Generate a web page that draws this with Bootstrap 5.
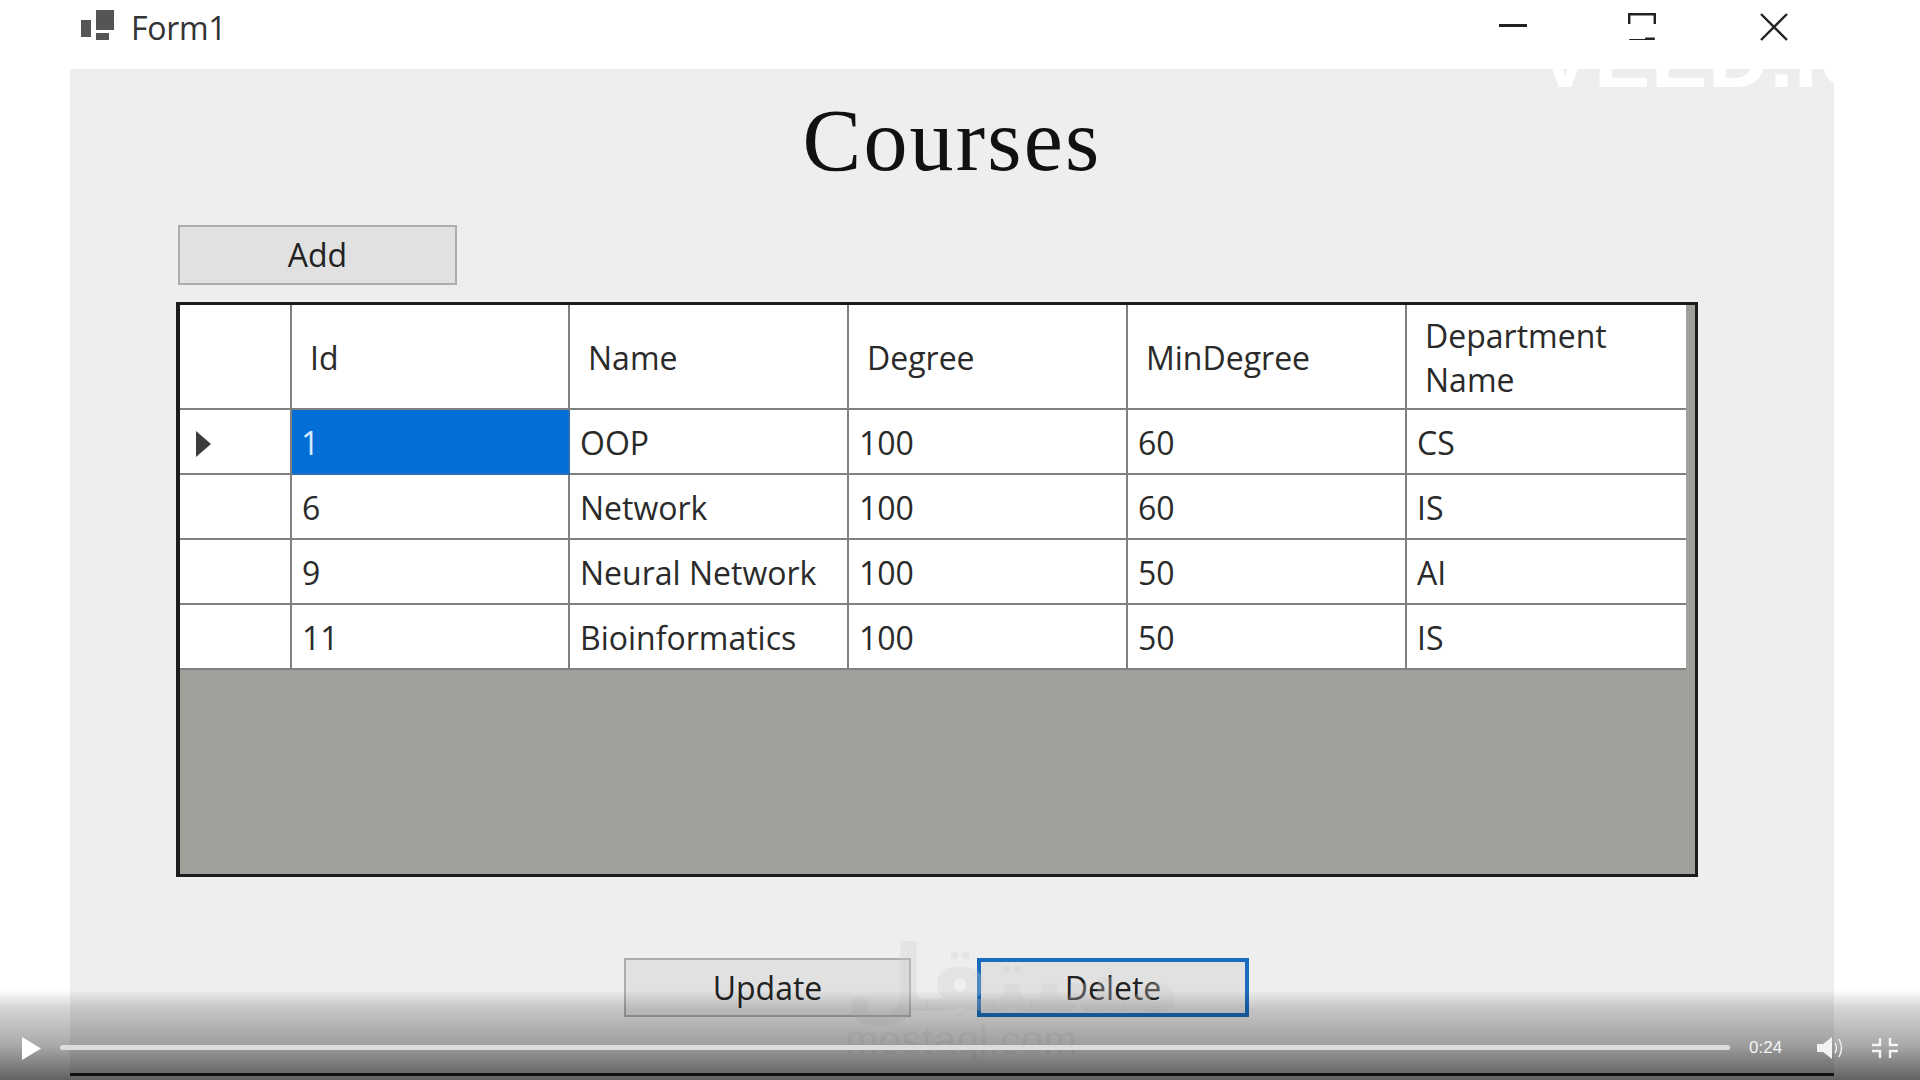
<!DOCTYPE html>
<html lang="en">
<head>
    <meta charset="UTF-8">
    <meta name="viewport" content="width=device-width, initial-scale=1.0">
    <title>Form1</title>
    <link href="https://cdn.jsdelivr.net/npm/bootstrap@5.3.0/dist/css/bootstrap.min.css" rel="stylesheet">
    <style>
        html, body { height: 1080px; overflow: hidden; background: #fff; }
        body { font-family: "Open Sans", "Noto Sans", sans-serif; color: #222; }

        .win-frame { margin-left: 70px; width: 1764px; height: 1076px; border-bottom: 3px solid #222; }
        .win-title { height: 69px; flex-shrink: 0; padding-left: 11px; background: #fff; }
        .win-icon { margin-top: 10px; }
        .win-title-text { font-size: 32px; line-height: 40px; margin-left: 16px; margin-top: 8px; color: #333; letter-spacing: -.3px; }
        .win-btn-min { margin-left: auto; margin-top: 24px; margin-right: 101px; }
        .win-btn-max { margin-top: 13px; margin-right: 104px; }
        .win-btn-close { margin-top: 13px; margin-right: 46px; }

        .form-area { background: #eee; padding-left: 108px; }
        .form-heading { font-family: "Liberation Serif", serif; font-size: 88px; line-height: 96px; margin: 24px 0 0; padding-right: 108px; text-align: center; font-weight: 400; color: #111; letter-spacing: 2.2px; height: 132px; }

        .form-btn { background: #e1e1e1; border: 2px solid #adadad; border-radius: 0; font-size: 32px; line-height: 1; color: #222; padding: 0; display: block; }
        .form-btn-add { width: 279px; height: 60px; }
        .form-btn-update { width: 287px; height: 59px; }
        .form-btn-delete { width: 272px; height: 59px; border: 4px solid #1a6cbc; margin-left: 66px; }

        .grid-box { width: 1522px; height: 575px; margin-top: 17px; margin-left: -2px; background: #a0a09b; border: 3px solid #1c1c1c; border-left-width: 4px; }
        .grid-table { width: 1506px; table-layout: fixed; margin: 0; background: #fff; border-collapse: collapse; font-size: 32px; }
        .grid-table th, .grid-table td { border: 2px solid #808080; padding: 2px 0 0 10px; vertical-align: middle; font-weight: 400; color: #2a2a2a; background: #fff; box-shadow: none; }
        .grid-table th { padding-left: 18px; height: 104px; line-height: 44px; }
        .grid-table td { height: 65px; }
        .grid-table tr > :first-child { border-left: 0; padding-left: 15px; }
        .grid-table tr > :last-child { border-right: 0; }
        .grid-table thead th { border-top: 0; }
        .grid-table td.cell-picked { background: #036fd6; color: #d8ecff; padding-left: 9px; border-color: #2a6fb5; }
        .row-arrow { display: block; margin-top: 2px; }

        .form-footer { height: 196px; padding-left: 446px; padding-top: 81px; }

        .player-bar { position: absolute; left: 0; right: 0; top: 990px; height: 90px; background: linear-gradient(to bottom, rgba(0,0,0,0), rgba(0,0,0,.17) 20%, rgba(0,0,0,.33) 60%, rgba(0,0,0,.62) 100%); }
        .player-row { height: 64px; padding-left: 22px; }
        .player-track { width: 1670px; height: 5px; border-radius: 3px; background: #dcdcdc; margin-left: 19px; margin-top: -2px; }
        .player-time { font-size: 17px; color: #f4f4f4; margin-left: 19px; font-family: "Liberation Sans", sans-serif; width: 36px; }
        .player-vol { margin-left: auto; margin-right: -1px; }
        .player-exit { margin-left: 29px; margin-right: 22px; }

        .mark-ar, .mark-en { position: absolute; color: rgba(205,205,205,.3); font-weight: 700; white-space: nowrap; }
        .mark-ar { left: 845px; top: 925px; font-size: 92px; line-height: 110px; font-family: "DejaVu Sans", sans-serif; }
        .mark-en { left: 845px; top: 1015px; font-size: 40px; line-height: 50px; font-family: "Liberation Sans", sans-serif; font-weight: 400; letter-spacing: .5px; }
        .mark-veed { position: absolute; left: 1537px; top: 22px; font-family: "Liberation Sans", sans-serif; font-weight: 700; font-size: 84px; line-height: 72px; letter-spacing: 1px; color: #fff; }
    </style>
</head>
<body>

<div class="win-frame d-flex flex-column">
    <div class="win-title d-flex align-items-start">
        <svg class="win-icon" width="34" height="32" viewBox="0 0 34 32" fill="#555">
            <rect x="15" y="0" width="18" height="20"/>
            <rect x="0" y="10" width="10" height="17"/>
            <rect x="15" y="23" width="13" height="7"/>
        </svg>
        <span class="win-title-text">Form1</span>
        <svg class="win-btn-min" width="28" height="4" viewBox="0 0 28 4"><rect width="28" height="3" fill="#222"/></svg>
        <svg class="win-btn-max" width="28" height="27" viewBox="0 0 28 27" fill="none" stroke="#222" stroke-width="2.5"><path d="M1.2 11V1.2H26.8V11M1.2 25.7H26.8" /></svg>
        <svg class="win-btn-close" width="28" height="28" viewBox="0 0 28 28" fill="none" stroke="#222" stroke-width="2.4"><path d="M1 1L27 27M27 1L1 27"/></svg>
    </div>

    <div class="form-area flex-grow-1">
        <h1 class="form-heading">Courses</h1>
        <button type="button" class="btn form-btn form-btn-add">Add</button>

        <div class="grid-box">
            <table class="table grid-table">
                <colgroup>
                    <col style="width:111px"><col style="width:278px"><col style="width:279px"><col style="width:279px"><col style="width:279px"><col style="width:280px">
                </colgroup>
                <thead>
                    <tr><th></th><th>Id</th><th>Name</th><th>Degree</th><th>MinDegree</th><th>Department Name</th></tr>
                </thead>
                <tbody>
                    <tr>
                        <td><svg class="row-arrow" width="17" height="28" viewBox="0 0 17 28"><path d="M1 1L16 14L1 27Z" fill="#3c3c3c"/></svg></td>
                        <td class="cell-picked">1</td><td>OOP</td><td>100</td><td>60</td><td>CS</td>
                    </tr>
                    <tr><td></td><td>6</td><td>Network</td><td>100</td><td>60</td><td>IS</td></tr>
                    <tr><td></td><td>9</td><td>Neural Network</td><td>100</td><td>50</td><td>AI</td></tr>
                    <tr><td></td><td>11</td><td>Bioinformatics</td><td>100</td><td>50</td><td>IS</td></tr>
                </tbody>
            </table>
        </div>

        <div class="form-footer d-flex align-items-start">
            <button type="button" class="btn form-btn form-btn-update">Update</button>
            <button type="button" class="btn form-btn form-btn-delete">Delete</button>
        </div>
    </div>
</div>

<!-- watermarks over the video -->
<div class="mark-veed">VEED.IO</div>
<div class="mark-ar">مستقل</div>
<div class="mark-en">mostaql.com</div>

<!-- video player controls -->
<div class="player-bar d-flex align-items-end">
    <div class="player-row d-flex align-items-center w-100">
        <svg width="19" height="23" viewBox="0 0 19 23"><path d="M0 0L19 11.5L0 23Z" fill="#fff"/></svg>
        <div class="player-track"></div>
        <span class="player-time">0:24</span>
        <svg class="player-vol" width="27" height="24" viewBox="0 0 27 24" fill="none">
            <path d="M0 8H6L15 1V23L6 16H0Z" fill="#f2f2f2"/>
            <path d="M18 7Q21 12 18 17M22 3Q27 12 22 21" stroke="#f2f2f2" stroke-width="1.4"/>
        </svg>
        <svg class="player-exit" width="26" height="20" viewBox="0 0 26 20" fill="none" stroke="#f4f4f4" stroke-width="2.4">
            <path d="M8 0V7H0M18 0V7H26M0 13H8V20M26 13H18V20"/>
        </svg>
    </div>
</div>

</body>
</html>
